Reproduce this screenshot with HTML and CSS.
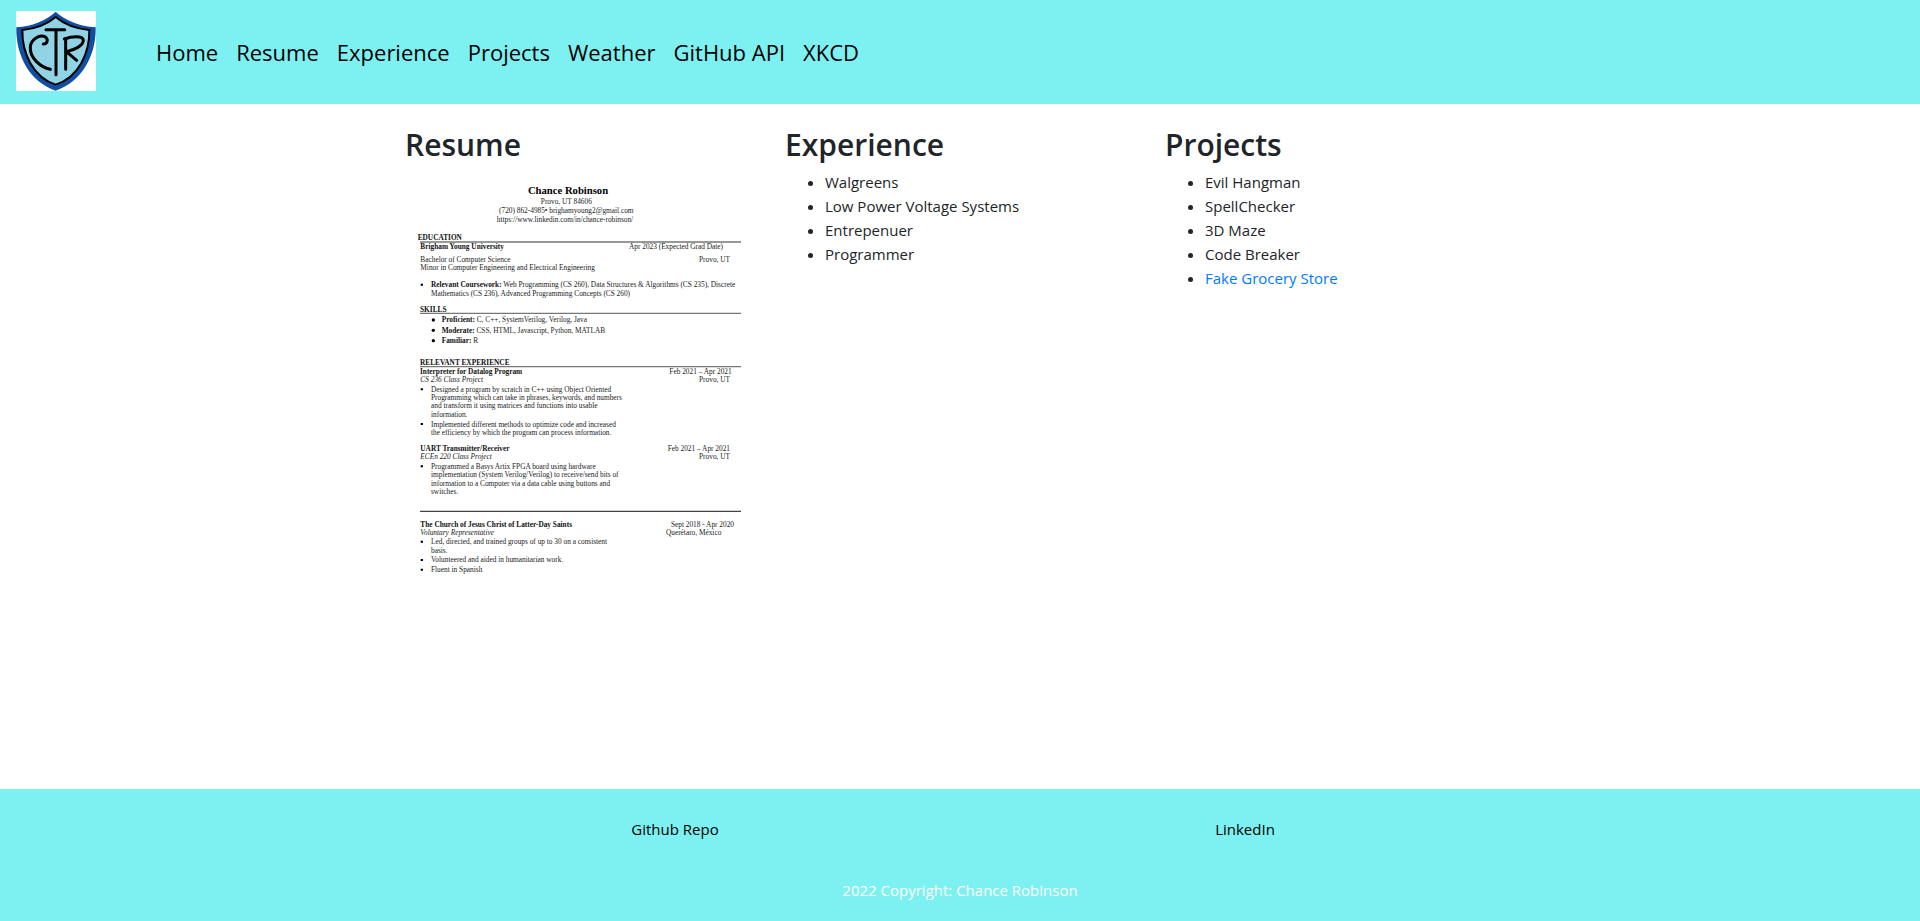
FILE: index.html
```html
<!DOCTYPE html>
<html lang="en">
<head>
<meta charset="utf-8">
<meta name="viewport" content="width=device-width, initial-scale=1">
<title>Chance Robinson</title>
<link rel="stylesheet" href="styles.css">
</head>
<body>
<header class="site-header">
  <a class="logo" href="#" aria-label="CTR home">
    <svg viewBox="0 0 240 240" aria-hidden="true">
      <rect width="240" height="240" fill="#fff"/>
      <path d="M119 2C93 27 50 46 1 49C-1 130 38 211 119 239C200 211 241 130 239 49C190 46 145 27 119 2Z" fill="#0f50a5"/>
      <path d="M119 18C93 40 62 53 19 57C18 128 52 199 119 221C187 199 221 128 220 57C177 53 145 40 119 18Z" fill="#8fd3e5" stroke="#000" stroke-width="6"/>
      <g fill="none" stroke="#000" stroke-width="9" stroke-linecap="round" stroke-linejoin="round">
        <path d="M82 99C95 99 98 84 87 77C70 70 46 84 43 107C40 142 75 169 103 175"/>
        <path d="M90 56H146M120 56V191"/>
        <path d="M149 84V175M145 84C166 76 201 72 202 88C202 104 175 117 151 122L182 148"/>
      </g>
    </svg>
  </a>
  <nav class="nav" aria-label="Main">
    <a href="#">Home</a>
    <a href="#resume">Resume</a>
    <a href="#experience">Experience</a>
    <a href="#projects">Projects</a>
    <a href="#">Weather</a>
    <a href="#">GitHub API</a>
    <a href="#">XKCD</a>
  </nav>
</header>

<main class="container columns">
  <section id="resume">
    <h2>Resume</h2>
    <svg class="resume" viewBox="0 0 1050 1320" role="img" aria-label="Resume of Chance Robinson">
      <g stroke="#777" stroke-width="4">
        <path d="M45 210H1008M45 424H1008M45 584H1008"/>
        <path d="M45 1018H1008" stroke="#444"/>
      </g>
      <g class="mid">
        <text class="name" x="489" y="66">Chance Robinson</text>
        <text x="484" y="96">Provo, UT 84606</text>
        <text x="484" y="122">(720) 862-4985• brighamyoung2@gmail.com</text>
        <text x="480" y="149">https://www.linkedin.com/in/chance-robinson/</text>
      </g>
      <g class="strong">
        <text x="38" y="203">EDUCATION</text>
        <text x="46" y="230">Brigham Young University</text>
        <text x="45" y="420">SKILLS</text>
        <text x="45" y="579">RELEVANT EXPERIENCE</text>
        <text x="45" y="606">Interpreter for Datalog Program</text>
        <text x="46" y="836">UART Transmitter/Receiver</text>
        <text x="46" y="1064">The Church of Jesus Christ of Latter-Day Saints</text>
      </g>
      <g class="italic">
        <text x="46" y="629">CS 236 Class Project</text>
        <text x="46" y="862">ECEn 220 Class Project</text>
        <text x="46" y="1088">Voluntary Representative</text>
      </g>
      <g class="end">
        <text x="954" y="230">Apr 2023 (Expected Grad Date)</text>
        <text x="975" y="270">Provo, UT</text>
        <text x="980" y="606">Feb 2021 – Apr 2021</text>
        <text x="975" y="629">Provo, UT</text>
        <text x="975" y="836">Feb 2021 – Apr 2021</text>
        <text x="975" y="862">Provo, UT</text>
        <text x="987" y="1064">Sept 2018 - Apr 2020</text>
        <text x="949" y="1088">Querétaro, México</text>
      </g>
      <text x="46" y="270">Bachelor of Computer Science</text>
      <text x="46" y="294">Minor in Computer Engineering and Electrical Engineering</text>
      <text x="78" y="346"><tspan class="strong">Relevant Coursework:</tspan> Web Programming (CS 260), Data Structures &amp; Algorithms (CS 235), Discrete</text>
      <text x="78" y="371">Mathematics (CS 236), Advanced Programming Concepts (CS 260)</text>
      <text x="110" y="451"><tspan class="strong">Proficient:</tspan> C, C++, SystemVerilog, Verilog, Java</text>
      <text x="110" y="482"><tspan class="strong">Moderate:</tspan> CSS, HTML, Javascript, Python, MATLAB</text>
      <text x="110" y="513"><tspan class="strong">Familiar:</tspan> R</text>
      <text x="78" y="659">Designed a program by scratch in C++ using Object Oriented</text>
      <text x="78" y="684">Programming which can take in phrases, keywords, and numbers</text>
      <text x="78" y="709">and transform it using matrices and functions into usable</text>
      <text x="78" y="734">information.</text>
      <text x="78" y="764">Implemented different methods to optimize code and increased</text>
      <text x="78" y="789">the efficiency by which the program can process information.</text>
      <text x="78" y="891">Programmed a Basys Artix FPGA board using hardware</text>
      <text x="78" y="915">implementation (System Verilog/Verilog) to receive/send bits of</text>
      <text x="78" y="941">information to a Computer via a data cable using buttons and</text>
      <text x="78" y="966">switches.</text>
      <text x="78" y="1116">Led, directed, and trained groups of up to 30 on a consistent</text>
      <text x="78" y="1143">basis.</text>
      <text x="78" y="1171">Volunteered and aided in humanitarian work.</text>
      <text x="78" y="1201">Fluent in Spanish</text>
      <g fill="#000">
        <circle cx="85" cy="444" r="5"/><circle cx="85" cy="475" r="5"/><circle cx="85" cy="506" r="5"/>
        <path d="M47 335h7v6h-7zM47 649h7v6h-7zM47 753h7v6h-7zM47 880h7v6h-7zM47 1106h7v6h-7zM47 1161h7v6h-7zM47 1190h7v6h-7z"/>
      </g>
    </svg>
  </section>
  <section id="experience">
    <h2>Experience</h2>
    <ul>
      <li>Walgreens</li>
      <li>Low Power Voltage Systems</li>
      <li>Entrepenuer</li>
      <li>Programmer</li>
    </ul>
  </section>
  <section id="projects">
    <h2>Projects</h2>
    <ul>
      <li>Evil Hangman</li>
      <li>SpellChecker</li>
      <li>3D Maze</li>
      <li>Code Breaker</li>
      <li><a href="#">Fake Grocery Store</a></li>
    </ul>
  </section>
</main>

<footer class="site-footer">
  <div class="container footer-links">
    <a href="#">Github Repo</a>
    <a href="#">LinkedIn</a>
  </div>
  <p class="copyright">2022 Copyright: Chance Robinson</p>
</footer>
</body>
</html>
```
FILE: styles.css
```css
* { box-sizing: border-box; }

body {
  margin: 0;
  min-height: 100vh;
  display: flex;
  flex-direction: column;
  font-family: "Open Sans", "Noto Sans", sans-serif;
  font-size: 15px;
  line-height: 24px;
  color: #212529;
  background: #fff;
}

.site-header {
  display: flex;
  align-items: center;
  gap: 60px;
  padding: 11px 16px 13px;
  background: #7df1f1;
}

.logo svg { display: block; width: 80px; height: 80px; }

.nav {
  display: flex;
  flex-wrap: wrap;
  gap: 18px;
  padding-top: 2px;
  font-size: 22px;
  line-height: 32px;
}

.nav a,
.footer-links a { color: #000; text-decoration: none; }

.container { width: 100%; max-width: 1140px; margin: 0 auto; }

.columns {
  flex: 1;
  display: grid;
  grid-template-columns: repeat(3, 1fr);
  padding-top: 22px;
}

.columns section { padding: 0 15px; }

h2 {
  margin: 0 0 6px;
  font-size: 30px;
  font-weight: 600;
  line-height: 38px;
}

ul { margin: 0; padding-left: 40px; }

li a { color: #007bff; text-decoration: none; }

.resume {
  display: block;
  width: 100%;
  margin-top: 8px;
  font-family: "Liberation Serif", serif;
  font-size: 22px;
  fill: #222;
}

.resume .mid { text-anchor: middle; }
.resume .end { text-anchor: end; }
.resume .strong { font-weight: bold; fill: #111; }
.resume .italic { font-style: italic; }
.resume .name { font-size: 32px; font-weight: bold; fill: #000; }

.site-footer { background: #7df1f1; text-align: center; }

.footer-links {
  display: grid;
  grid-template-columns: 1fr 1fr;
  padding: 28px 0 21px;
}

.copyright { margin: 0; padding: 16px 16px 19px; color: #fff; }
```
